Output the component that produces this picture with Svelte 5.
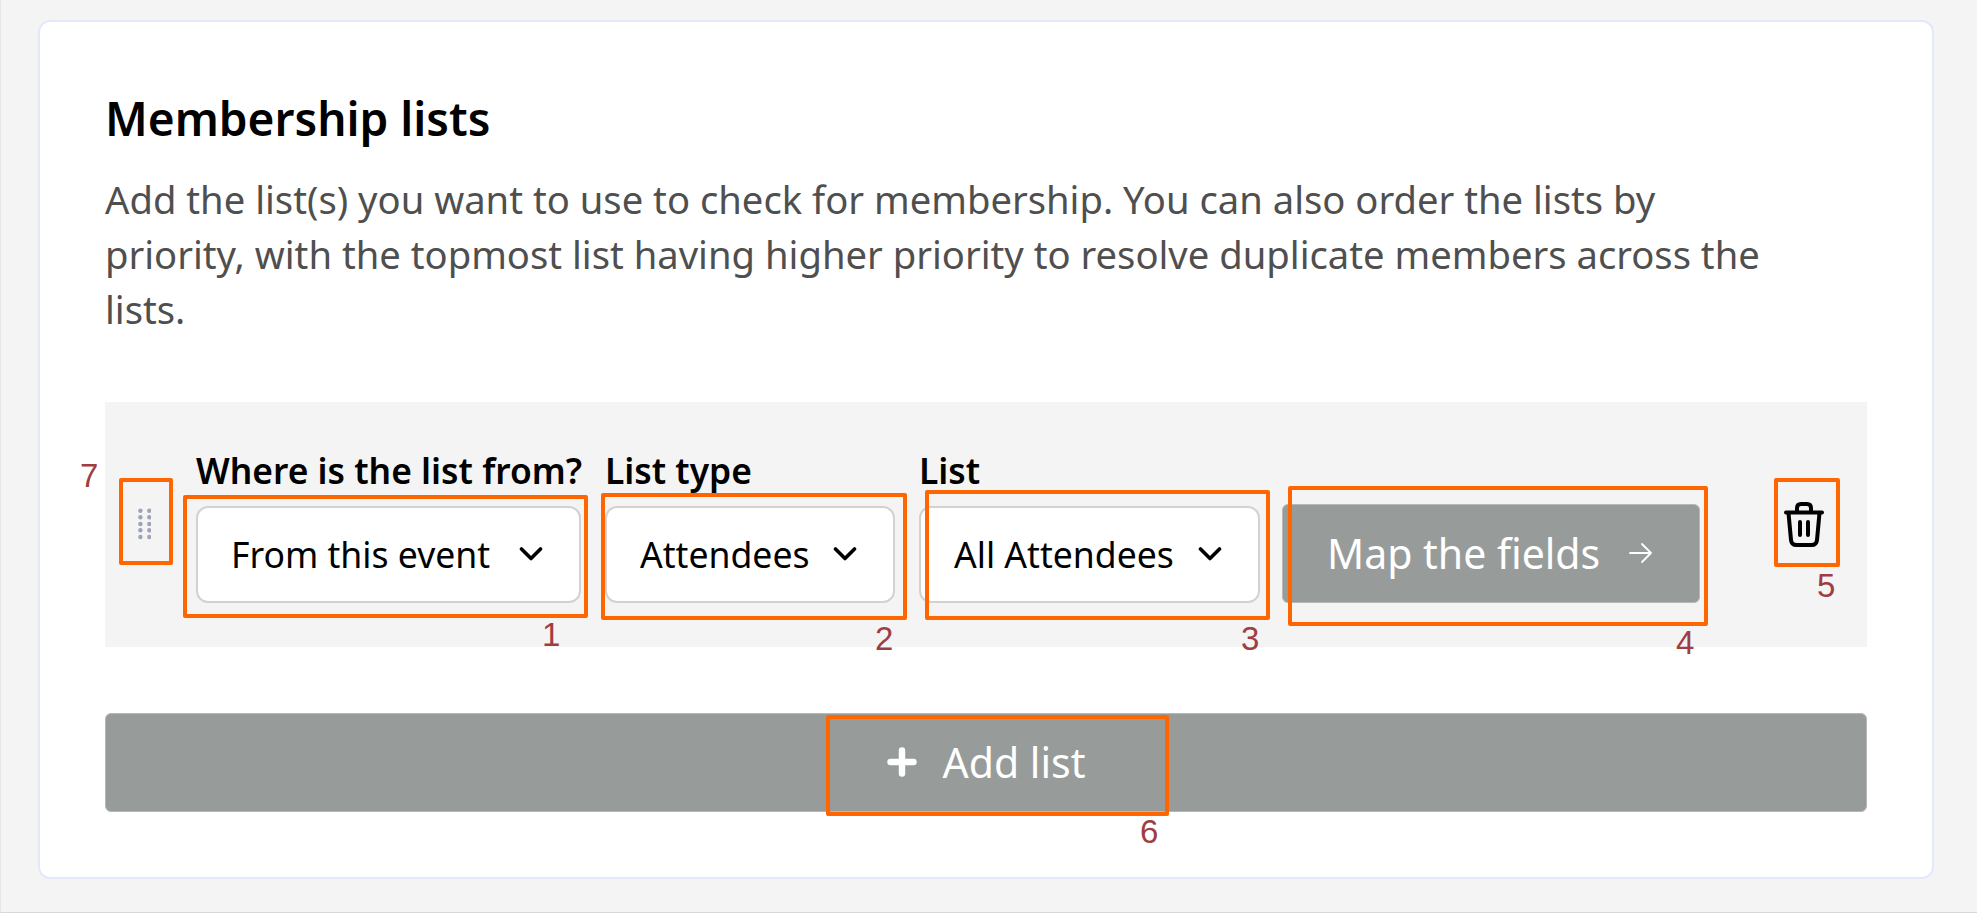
<script lang="ts">
	const fields = [
		{ label: 'Where is the list from?', value: 'From this event', width: 385 },
		{ label: 'List type', value: 'Attendees', width: 290 },
		{ label: 'List', value: 'All Attendees', width: 341 }
	];

	// review markup drawn on top of the screenshot
	const boxes = [
		{ x: 182, y: 495, w: 405, h: 123 },
		{ x: 600, y: 493, w: 306, h: 127 },
		{ x: 924, y: 490, w: 345, h: 130 },
		{ x: 1287, y: 486, w: 420, h: 140 },
		{ x: 1773, y: 478, w: 66, h: 89 },
		{ x: 825, y: 715, w: 343, h: 101 },
		{ x: 118, y: 478, w: 54, h: 87 }
	];
	const marks = [
		{ n: 1, x: 541, y: 616 },
		{ n: 2, x: 874, y: 620 },
		{ n: 3, x: 1240, y: 620 },
		{ n: 4, x: 1675, y: 624 },
		{ n: 5, x: 1816, y: 567 },
		{ n: 6, x: 1139, y: 813 },
		{ n: 7, x: 79, y: 457 }
	];
	const dotRows = [2.7, 9.3, 16, 22.3, 29];
</script>

<div class="page">
	<section class="card">
		<h2 class="title">Membership lists</h2>
		<p class="desc">
			Add the list(s) you want to use to check for membership. You can also order the lists by
			priority, with the topmost list having higher priority to resolve duplicate members across the
			lists.
		</p>

		<div class="row">
			<button class="handle" aria-label="Drag to reorder">
				<svg width="13" height="32" viewBox="0 0 13 32" fill="#9ea3b8">
					{#each dotRows as cy}
						<circle cx="2.4" {cy} r="2.2" />
						<circle cx="11.3" {cy} r="2.2" />
					{/each}
				</svg>
			</button>

			{#each fields as f}
				<div class="field" style="width: {f.width}px">
					<span class="label">{f.label}</span>
					<div class="select">
						<span>{f.value}</span>
						<svg width="24" height="16" viewBox="0 0 24 16" fill="none" stroke="#000" stroke-width="3.6" stroke-linecap="round" stroke-linejoin="round">
							<path d="M2.5 3 L12 12.5 L21.5 3" />
						</svg>
					</div>
				</div>
			{/each}

			<button class="map">
				<span>Map the fields</span>
				<svg width="26" height="24" viewBox="0 0 26 24" fill="none" stroke="#fff" stroke-width="1.8" stroke-linecap="round" stroke-linejoin="round">
					<path d="M2 12 H23 M14 3 L23 12 L14 21" />
				</svg>
			</button>

			<button class="trash" aria-label="Delete list">
				<svg width="40" height="45" viewBox="0 0 40 45" fill="none" stroke="#000" stroke-width="4" stroke-linecap="round" stroke-linejoin="round">
					<path d="M2 10.5 H38" />
					<path d="M13 10 V6 Q13 2 17 2 H23 Q27 2 27 6 V10" />
					<path d="M4.5 11 L7 38 Q7.5 43 12.5 43 H27.5 Q32.5 43 33 38 L35.5 11" />
					<path d="M16 20 V33 M24 20 V33" />
				</svg>
			</button>
		</div>

		<button class="add">
			<svg width="30" height="30" viewBox="0 0 30 30" fill="none" stroke="#fff" stroke-width="6.4" stroke-linecap="round">
				<path d="M15 3.5 V26.5 M3.5 15 H26.5" />
			</svg>
			<span>Add list</span>
		</button>
	</section>

	{#each boxes as b}
		<div class="box" style="left: {b.x}px; top: {b.y}px; width: {b.w}px; height: {b.h}px"></div>
	{/each}
	{#each marks as m}
		<span class="mark" style="left: {m.x}px; top: {m.y}px">{m.n}</span>
	{/each}
</div>

<style>
	:global(body) {
		margin: 0;
		background: #f4f4f4;
	}

	.page {
		position: relative;
		box-sizing: border-box;
		height: 913px;
		padding: 20px 43px 0 38px;
		background: #f4f4f4;
		border-left: 1px solid #e6e6e6;
		border-bottom: 1px solid #d8d8d8;
		font-family: 'Noto Sans', sans-serif;
		overflow: hidden;
	}

	.card {
		box-sizing: border-box;
		height: 859px;
		margin-left: -1px;
		padding: 66px 65px 0;
		background: #fff;
		border: 2px solid #e3e9fb;
		border-radius: 12px;
	}

	.title {
		margin: 0;
		font-size: 46px;
		line-height: 60px;
		font-weight: 600;
		color: #000;
	}

	.desc {
		margin: 24px 0 0;
		width: 1670px;
		font-size: 38.2px;
		line-height: 55px;
		color: #4f4f4f;
	}

	.row {
		display: flex;
		align-items: flex-end;
		box-sizing: border-box;
		height: 245px;
		margin-top: 64.5px;
		padding-bottom: 44px;
		background: #f4f4f4;
	}

	button {
		font-family: inherit;
		border: none;
		padding: 0;
		background: none;
	}

	.handle {
		display: flex;
		width: 91px;
		height: 97px;
		padding: 2px 0 0 33px;
		box-sizing: border-box;
	}

	.field {
		display: flex;
		flex-direction: column;
		margin-right: 24px;
	}

	.label {
		font-size: 35.4px;
		line-height: 40px;
		font-weight: 600;
		color: #000;
		white-space: nowrap;
		margin-bottom: 16px;
	}

	.select {
		display: flex;
		align-items: center;
		justify-content: space-between;
		box-sizing: border-box;
		height: 97px;
		padding: 0 36px 0 33px;
		background: #fff;
		border: 2px solid #d2d2d2;
		border-radius: 12px;
		font-size: 35.6px;
		color: #000;
		white-space: nowrap;
	}

	.map {
		display: flex;
		align-items: center;
		gap: 28px;
		box-sizing: border-box;
		width: 418px;
		height: 99px;
		margin-left: -2px;
		padding-left: 44px;
		background: #979c9b;
		border: 1px solid #b4b8b7;
		border-radius: 6px;
		color: #fff;
		font-size: 41px;
		white-space: nowrap;
	}

	.trash {
		display: flex;
		margin: 0 0 56px 84px;
	}

	.add {
		display: flex;
		align-items: center;
		justify-content: center;
		gap: 26px;
		box-sizing: border-box;
		width: 100%;
		height: 99px;
		margin-top: 66px;
		background: #979c9b;
		border: 1px solid #b4b8b7;
		border-radius: 6px;
		color: #fff;
		font-size: 41px;
	}

	.box {
		position: absolute;
		box-sizing: border-box;
		border: 4px solid #ff6600;
		border-radius: 2px;
	}

	.mark {
		position: absolute;
		font-family: 'Liberation Sans', sans-serif;
		font-size: 33px;
		line-height: 38px;
		color: #9e3d42;
	}
</style>
